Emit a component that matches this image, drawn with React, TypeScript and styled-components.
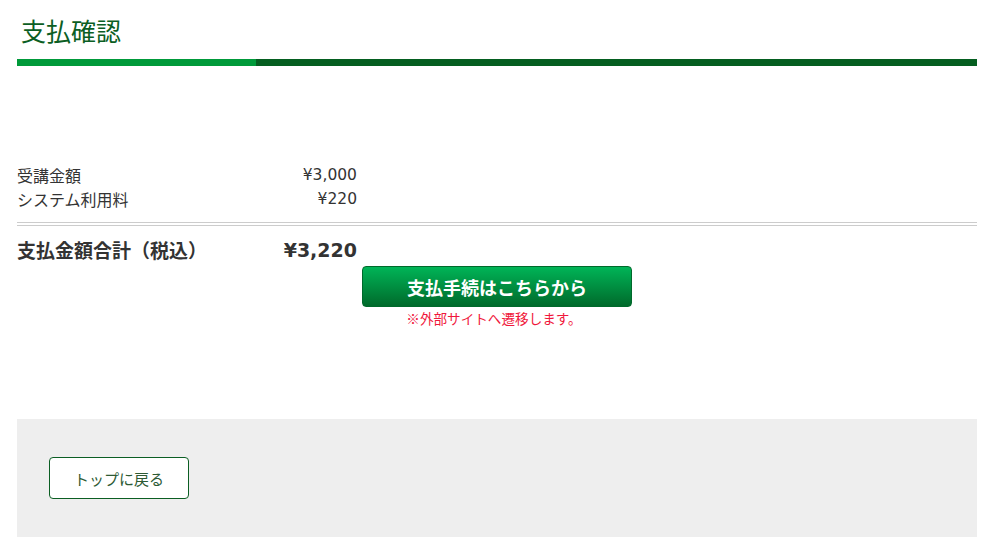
import React from "react";
import styled, { createGlobalStyle } from "styled-components";

const GlobalStyle = createGlobalStyle`
  html, body { margin: 0; padding: 0; background: #fff; }
  body {
    font-family: "Noto Sans CJK JP", "Noto Sans", sans-serif;
    color: #333;
  }
`;

const Page = styled.div`
  width: 960px;
  margin-left: 17px;
  display: flex;
  flex-direction: column;
`;

const Title = styled.h1`
  margin: 13px 0 0 4px;
  font-size: 25px;
  line-height: 35px;
  font-weight: 400;
  color: #0b5e23;
`;

const Bar = styled.div`
  margin-top: 11px;
  height: 7px;
  display: flex;
`;

const BarSegment = styled.div<{ $color: string; $w?: string }>`
  background: ${(p) => p.$color};
  ${(p) => (p.$w ? `width: ${p.$w};` : "flex: 1;")}
`;

const Rows = styled.div`
  margin-top: 97px;
  width: 340px;
  display: grid;
  grid-template-columns: 1fr auto;
  grid-auto-rows: 24px;
  align-items: center;
  font-size: 16px;
  line-height: 24px;
  color: #333;
`;

const Amount = styled.span<{ $size?: number }>`
  text-align: right;
  font-family: "DejaVu Sans", "Noto Sans", sans-serif;
  font-size: ${(p) => p.$size ?? 15.5}px;
  line-height: 24px;
`;

const Divider = styled.div`
  margin-top: 11px;
  height: 2px;
  border-top: 1px solid #cccccc;
  border-bottom: 1px solid #cccccc;
`;

const TotalRow = styled.div`
  margin-top: 10px;
  width: 340px;
  height: 28px;
  display: flex;
  justify-content: space-between;
  align-items: center;
  font-size: 19px;
  line-height: 28px;
  font-weight: 700;
  color: #333;
`;

const PayArea = styled.div`
  margin-top: 2px;
  display: flex;
  flex-direction: column;
  align-items: center;
`;

const PayButton = styled.button`
  width: 270px;
  height: 41px;
  border: 1px solid #00692b;
  border-radius: 4px;
  background: linear-gradient(#00b457, #006a2b);
  color: #fff;
  font-family: inherit;
  font-size: 18px;
  font-weight: 700;
  padding: 0;
  cursor: pointer;
`;

const Note = styled.p`
  margin: 1px 0 0 -6px;
  font-size: 13.6px;
  line-height: 20px;
  color: #f0173c;
`;

const Footer = styled.div`
  margin-top: 91px;
  height: 118px;
  box-sizing: border-box;
  background: #eeeeee;
  padding: 38px 32px;
  display: flex;
  align-items: flex-start;
`;

const BackButton = styled.button`
  width: 140px;
  height: 42px;
  background: #fff;
  border: 1px solid #0b5e23;
  border-radius: 4px;
  color: #2d5a34;
  font-family: inherit;
  font-size: 15px;
  padding: 0;
  cursor: pointer;
`;

export default function App() {
  return (
    <>
      <GlobalStyle />
      <Page>
        <Title>支払確認</Title>
        <Bar>
          <BarSegment $color="#009a3a" $w="239px" />
          <BarSegment $color="#055e20" />
        </Bar>
        <Rows>
          <span>受講金額</span>
          <Amount>¥3,000</Amount>
          <span>システム利用料</span>
          <Amount>¥220</Amount>
        </Rows>
        <Divider />
        <TotalRow>
          <span>支払金額合計（税込）</span>
          <Amount $size={19}>¥3,220</Amount>
        </TotalRow>
        <PayArea>
          <PayButton>支払手続はこちらから</PayButton>
          <Note>※外部サイトへ遷移します。</Note>
        </PayArea>
        <Footer>
          <BackButton>トップに戻る</BackButton>
        </Footer>
      </Page>
    </>
  );
}
